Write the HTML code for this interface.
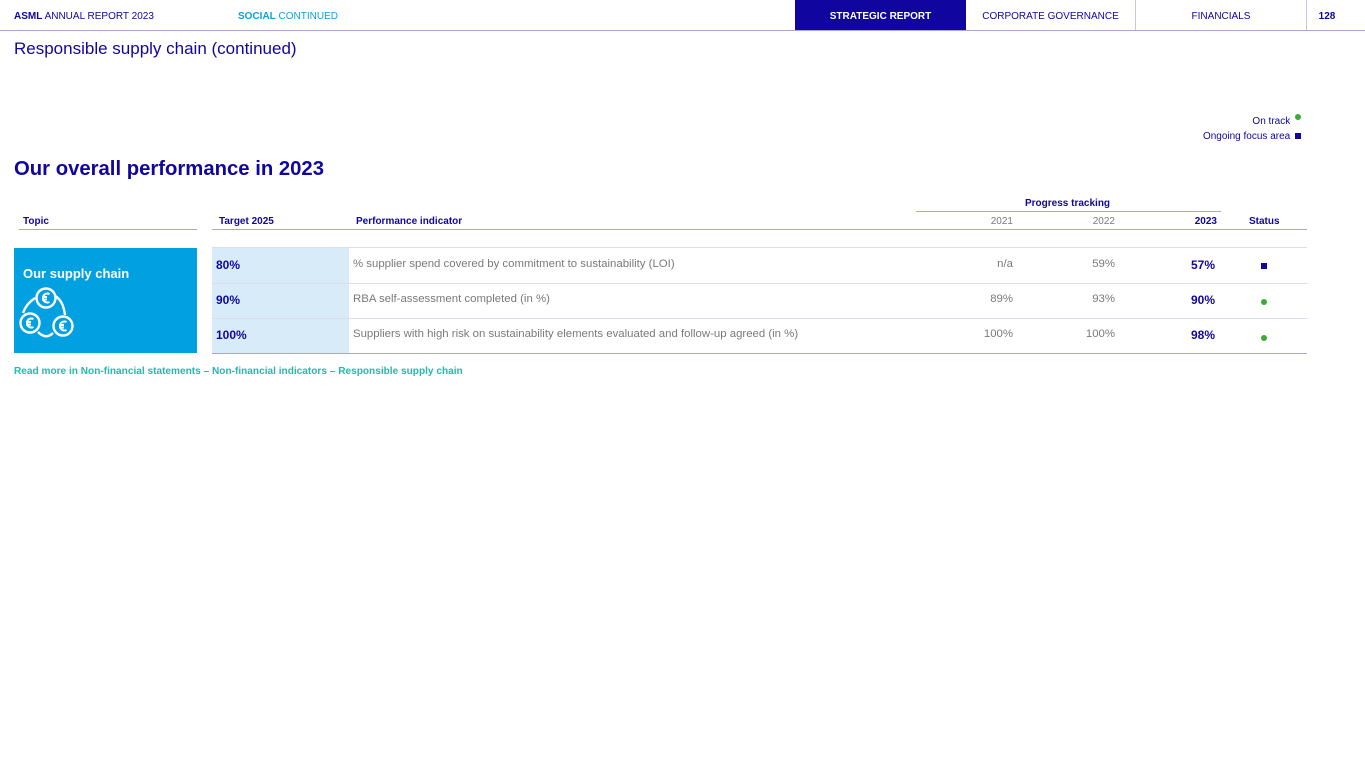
<!DOCTYPE html>
<html><head><meta charset="utf-8"><style>
*{margin:0;padding:0;box-sizing:border-box}
body{width:1365px;height:769px;background:#fff;font-family:"Liberation Sans",Arial,sans-serif;position:relative;overflow:hidden;color:#10069f}
.a{position:absolute;white-space:nowrap}
.g{color:#7a7a7a}
.dot{display:inline-block;width:6px;height:6px;border-radius:50%;background:#3daa35}
.sq{display:inline-block;width:6px;height:6px;background:#10069f}
</style></head><body>
<div class="a" style="left:14px;top:11px;font-size:10px"><b>ASML</b> ANNUAL REPORT 2023</div>
<div class="a" style="left:238px;top:11px;font-size:10px;color:#0fa0dc"><b>SOCIAL</b> CONTINUED</div>
<div class="a" style="left:795px;top:0;width:171px;height:30px;background:#10069f;color:#fff;font-size:10px;font-weight:bold;text-align:center;line-height:33px">STRATEGIC REPORT</div>
<div class="a" style="left:966px;top:0;width:169px;height:30px;font-size:10px;text-align:center;line-height:33px">CORPORATE GOVERNANCE</div>
<div class="a" style="left:1135px;top:0;width:1px;height:30px;background:#c8c6e6"></div>
<div class="a" style="left:1136px;top:0;width:170px;height:30px;font-size:10px;text-align:center;line-height:33px">FINANCIALS</div>
<div class="a" style="left:1306px;top:0;width:1px;height:30px;background:#c8c6e6"></div>
<div class="a" style="left:1307px;top:0;width:40px;height:30px;font-size:10px;font-weight:bold;text-align:center;line-height:33px">128</div>
<div class="a" style="left:0;top:30px;width:1365px;height:1px;background:#aaa6d8"></div>
<div class="a" style="left:14px;top:39px;font-size:17px">Responsible supply chain (continued)</div>
<div class="a" style="right:64px;top:114px;font-size:10px">On track <span class="dot" style="vertical-align:4px;margin-left:2px"></span></div>
<div class="a" style="right:64px;top:131px;font-size:10px">Ongoing focus area <span class="sq" style="margin-left:2px"></span></div>
<div class="a" style="left:14px;top:158px;font-size:20.3px;font-weight:bold">Our overall performance in 2023</div>
<div class="a" style="left:1025px;top:198px;font-size:10px;font-weight:bold">Progress tracking</div>
<div class="a" style="left:916px;top:211px;width:305px;height:1px;background:#aaa6d8"></div>
<div class="a" style="left:23px;top:216px;font-size:10px;font-weight:bold">Topic</div>
<div class="a" style="left:219px;top:216px;font-size:10px;font-weight:bold">Target 2025</div>
<div class="a" style="left:356px;top:216px;font-size:10px;font-weight:bold">Performance indicator</div>
<div class="a g" style="left:990px;top:216px;font-size:10px;width:23px;text-align:right">2021</div>
<div class="a g" style="left:1092px;top:216px;font-size:10px;width:23px;text-align:right">2022</div>
<div class="a" style="left:1190px;top:216px;font-size:10px;font-weight:bold;width:27px;text-align:right">2023</div>
<div class="a" style="left:1249px;top:216px;font-size:10px;font-weight:bold">Status</div>
<div class="a" style="left:19px;top:229px;width:178px;height:1px;background:#aaa6d8"></div>
<div class="a" style="left:212px;top:229px;width:1095px;height:1px;background:#aaa6d8"></div>
<div class="a" style="left:14px;top:248px;width:183px;height:105px;background:#00a0e1"></div>
<div class="a" style="left:23px;top:266px;font-size:13px;font-weight:bold;color:#fff">Our supply chain</div>
<svg class="a" style="left:18px;top:284px" width="62" height="58" viewBox="0 0 62 58" fill="none" stroke="#fff" stroke-width="2.4">
<circle cx="28" cy="14" r="9.5"/><circle cx="12" cy="39" r="9.5"/><circle cx="45" cy="42" r="9.5"/>
<path d="M5 29 Q8 20 17 14"/><path d="M37 12 Q45 16 47 31"/><path d="M20 48 Q28 56 35 49"/>
<g stroke-width="2"><path d="M31.5 10a4.5 4.5 0 1 0 0 8M24 13h5M24 15.5h5"/><path d="M15.5 35a4.5 4.5 0 1 0 0 8M8 38h5M8 40.5h5"/><path d="M48.5 38a4.5 4.5 0 1 0 0 8M41 41h5M41 43.5h5"/></g>
</svg>
<div class="a" style="left:212px;top:247px;width:1095px;height:1px;background:#dcdcec"></div>
<div class="a" style="left:212px;top:248px;width:137px;height:105px;background:#d7ecf8"></div>
<div class="a" style="left:212px;top:283px;width:1095px;height:1px;background:#dcdcec"></div>
<div class="a" style="left:212px;top:318px;width:1095px;height:1px;background:#dcdcec"></div>
<div class="a" style="left:212px;top:353px;width:1095px;height:1px;background:#aaa6d8"></div>
<div class="a" style="left:216px;top:258px;font-size:12px;font-weight:bold">80%</div>
<div class="a" style="left:216px;top:293px;font-size:12px;font-weight:bold">90%</div>
<div class="a" style="left:216px;top:328px;font-size:12px;font-weight:bold">100%</div>
<div class="a g" style="left:353px;top:258px;font-size:11.4px">% supplier spend covered by commitment to sustainability (LOI)</div>
<div class="a g" style="left:353px;top:293px;font-size:11.4px">RBA self-assessment completed (in %)</div>
<div class="a g" style="left:353px;top:328px;font-size:11.4px">Suppliers with high risk on sustainability elements evaluated and follow-up agreed (in %)</div>
<div class="a g" style="left:960px;top:258px;width:53px;text-align:right;font-size:11.4px">n/a</div>
<div class="a g" style="left:960px;top:293px;width:53px;text-align:right;font-size:11.4px">89%</div>
<div class="a g" style="left:960px;top:328px;width:53px;text-align:right;font-size:11.4px">100%</div>
<div class="a g" style="left:1060px;top:258px;width:55px;text-align:right;font-size:11.4px">59%</div>
<div class="a g" style="left:1060px;top:293px;width:55px;text-align:right;font-size:11.4px">93%</div>
<div class="a g" style="left:1060px;top:328px;width:55px;text-align:right;font-size:11.4px">100%</div>
<div class="a" style="left:1160px;top:258px;width:55px;text-align:right;font-size:12px;font-weight:bold">57%</div>
<div class="a" style="left:1160px;top:293px;width:55px;text-align:right;font-size:12px;font-weight:bold">90%</div>
<div class="a" style="left:1160px;top:328px;width:55px;text-align:right;font-size:12px;font-weight:bold">98%</div>
<span class="a sq" style="left:1261px;top:263px"></span>
<span class="a dot" style="left:1261px;top:299px"></span>
<span class="a dot" style="left:1261px;top:335px"></span>
<div class="a" style="left:14px;top:366px;font-size:10.1px;font-weight:bold;color:#1fbcad">Read more in Non-financial statements – Non-financial indicators – Responsible supply chain</div>
</body></html>
